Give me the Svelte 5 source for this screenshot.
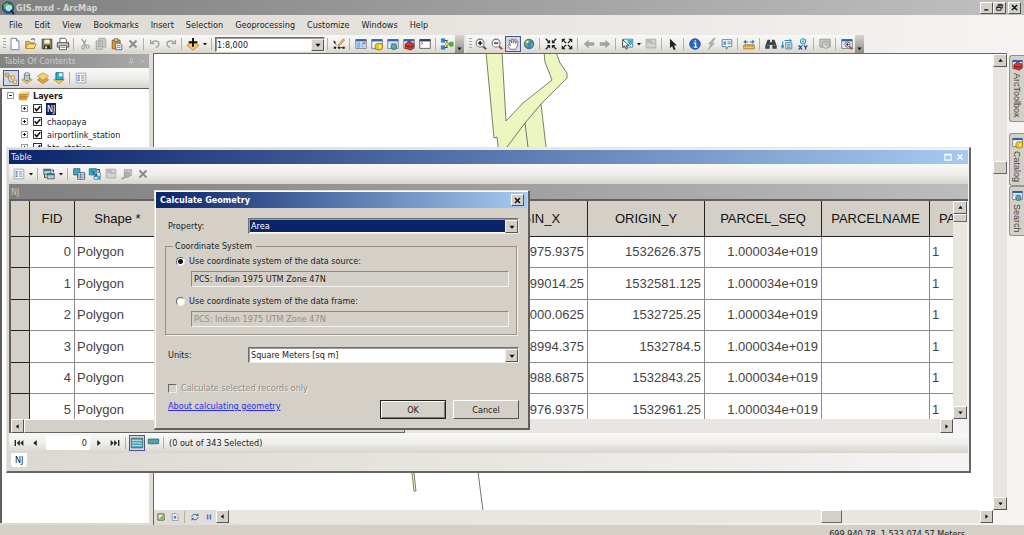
<script lang="ts">
  type Column = { name: string; width: number; align?: 'left' | 'right' };
  type Tool = { kind: 'icon' | 'sep' | 'arrow' | 'scale'; icon?: string; label?: string; active?: boolean };

  const win =
    '<path d="M2 3h12v10H2z" fill="#f4f6f8" stroke="#6f7680"/><path d="M2 2.500h12v2.500H2z" fill="#2f62b4"/>';

  // 16x16 glyph bodies
  const icons: Record<string, string> = {
    new: '<path d="M3.500 1.500h6l3 3v10h-9z" fill="#fff" stroke="#68788c"/><path d="M9.500 1.500v3h3" fill="#dce6f0" stroke="#68788c"/>',
    open: '<path d="M2 13V5h4l1 1.500h5V13z" fill="#e0b84c" stroke="#a87a1e"/><path d="M2 13l2.500-5H14l-2.500 5z" fill="#fbe08a" stroke="#b48a2a"/><path d="M8 3c2-2 4-1 4 1" fill="none" stroke="#2a62a8" stroke-width="1.200"/>',
    save: '<path d="M2.500 2.500h11v11h-11z" fill="#8f8648" stroke="#3a3a2c"/><path d="M5 3h6v4.500H5z" fill="#f3f1de"/><path d="M4.500 9.500h7v4h-7z" fill="#2e2e2e"/><path d="M6 10.500h2v2.500H6z" fill="#eee"/>',
    print: '<path d="M4.500 6V1.500h6l1.500 2V6" fill="#fff" stroke="#555"/><path d="M1.500 6.500h13v5h-13z" fill="#c4c6c8" stroke="#444"/><path d="M4 10h8v4.500H4z" fill="#fff" stroke="#555"/><path d="M5.500 12h5" stroke="#888"/><path d="M11.500 8h2" stroke="#d8a020"/>',
    cut: '<path d="M4 2l5 8M9 3L6.500 9.500" stroke="#a0a0a0" stroke-width="1.600" fill="none"/><circle cx="6" cy="12" r="1.800" fill="none" stroke="#a0a0a0" stroke-width="1.300"/><circle cx="11" cy="11" r="1.800" fill="none" stroke="#a0a0a0" stroke-width="1.300"/>',
    copy: '<path d="M5.500 1.500h7l1 1v9h-8z" fill="#c9c9c6" stroke="#a0a0a0"/><path d="M2.500 4.500h7v9.500h-7z" fill="#d2d0cc" stroke="#9a9a9a"/><path d="M4 7h4M4 9h4M4 11h4" stroke="#9a9a9a"/>',
    paste: '<path d="M2.500 3.500h9v10h-9z" fill="#d99a2e" stroke="#8a5c14"/><path d="M5 2h4v3H5z" fill="#d8d8d8" stroke="#666"/><path d="M6.500 7h5l2 2v5.500h-7z" fill="#eef4fc" stroke="#3f66a0"/><path d="M8 10h4M8 12h4" stroke="#6a8cc0"/>',
    del: '<path d="M4 4l8 8M12 4l-8 8" stroke="#8c8c8c" stroke-width="2.400"/>',
    undo: '<path d="M3 3v4.500h4.500" fill="none" stroke="#a4a4a4" stroke-width="1.600"/><path d="M3.500 7C6 4 12 3.500 12.500 7.500c.3 2-1.500 3.500-3.500 4.500" fill="none" stroke="#a4a4a4" stroke-width="1.600"/>',
    redo: '<path d="M13 3v4.500H8.500" fill="none" stroke="#a4a4a4" stroke-width="1.600"/><path d="M12.500 7C10 4 4 3.500 3.500 7.500c-.3 2 1.500 3.500 3.500 4.500" fill="none" stroke="#a4a4a4" stroke-width="1.600"/>',
    add: '<path d="M1 9.500L8 5l7 4.500L8 15z" fill="#f4c868" stroke="#c08a28"/><path d="M8 1v10M3 6h10" stroke="#111" stroke-width="2.200"/>',
    editor: '<path d="M2 4l3 5M3 12h9" stroke="#333" stroke-dasharray="2 1.500"/><path d="M2 11h2.500v2.500H2zM7 11h2.500v2.500H7zM12 11h2.500v2.500H12zM2 5h2v2H2z" fill="#111"/><path d="M7 9l6-7 1.500 1.500L8.500 10 6.500 10.500z" fill="#e8bc50" stroke="#8a6a20" stroke-width=".6"/>',
    table: win + '<path d="M3 5.500h3v7H3z" fill="#9cc2ee"/><path d="M3 8h10M3 10.500h10M6.500 5v8M10 5v8" stroke="#6c9ed8" stroke-width=".8"/><path d="M10 6h3v2h-3z" fill="#e86a3c"/>',
    catalog: win + '<path d="M6 9l2-2 6 .5v6L11 15l-5-1z" fill="#e8c420" stroke="#8e7408" stroke-width=".8"/><path d="M10 9h3v4h-3z" fill="#fbe878"/>',
    search: win + '<path d="M3 6h10v3H3z" fill="#c8d4de"/><circle cx="9" cy="11" r="3.300" fill="#4ea4e0" stroke="#2a6a90"/><path d="M7 11l2-2 2 1-1 3z" fill="#58b848"/>',
    toolbox: win + '<path d="M3.500 8l3-2 7 1v5l-3 3-7-2z" fill="#d03a30" stroke="#84201a" stroke-width=".8"/><path d="M6 6l3-1 2 1.500M3.500 10l7 1.500 3-2" fill="none" stroke="#701410"/>',
    python: '<path d="M2 3h12v10H2z" fill="#fff" stroke="#555"/><path d="M2 2.500h12v2.500H2z" fill="#283c6c"/><path d="M4 6l1.500 1.200L4 8.500" fill="none" stroke="#444"/>',
    model: '<path d="M4 4h4v4M4 12h4V8h5" stroke="#444" stroke-width="1.200" fill="none"/><path d="M1.500 2h4v4h-4zM1.500 10h4v4h-4z" fill="#2c8ade" stroke="#1d5f9e" stroke-width=".6"/><path d="M8 5.500l2.500 2.500L8 10.500 5.500 8z" fill="#f0d040" stroke="#937a10" stroke-width=".6"/><path d="M11 6h4v4.500h-4z" fill="#48b848" stroke="#2c7a2c" stroke-width=".6"/>',
    zoomin: '<path d="M9.500 10l4.500 4" stroke="#8a5040" stroke-width="2.400"/><circle cx="7" cy="7" r="4.600" fill="#f4f8fb" stroke="#70787e" stroke-width="1.200"/><path d="M7 4.500v5M4.500 7h5" stroke="#111" stroke-width="1.600"/>',
    zoomout: '<path d="M9.500 10l4.500 4" stroke="#a85040" stroke-width="2.400"/><circle cx="7" cy="7" r="4.600" fill="#f4f8fb" stroke="#70787e" stroke-width="1.200"/><path d="M4.500 7h5" stroke="#333" stroke-width="1.600"/>',
    pan: '<path d="M5 14L2 9.500 3 8.500l2 1.500L3.500 4l1.500-.5L6.500 7 6.500 2.500H8L8.500 7 10 2.500l1.300.5L10.800 7.500 12.500 4.500l1.300.6L12.500 11l-1.500 3z" fill="#fff" stroke="#555" stroke-width=".8"/>',
    globe: '<circle cx="8" cy="8" r="5.500" fill="#3c84cc" stroke="#24507c" stroke-width=".8"/><path d="M4 4.500l4-1.500 1 2-3 3 1 4-3-2-1-3zM10 7l3 0-1 4-2 0z" fill="#70b840"/><circle cx="6" cy="5.500" r="1.500" fill="#e8f4c8" opacity=".8"/>',
    fixedin: '<path d="M2 2l4 4M14 2l-4 4M2 14l4-4M14 14l-4-4" stroke="#222" stroke-width="1.600"/><path d="M7 3v4H3zM9 3v4h4zM7 13V9H3zM9 13V9h4z" fill="#222"/>',
    fixedout: '<path d="M3 3l4 4M13 3L9 7M3 13l4-4M13 13L9 9" stroke="#222" stroke-width="1.600"/><path d="M2 2h4.500L2 6.500zM14 2H9.500L14 6.500zM2 14h4.500L2 9.500zM14 14H9.500L14 9.500z" fill="#222"/>',
    back: '<path d="M2 8l5.500-5v3H14v4H7.500v3z" fill="#a2a2a2"/>',
    forward: '<path d="M14 8L8.500 3v3H2v4h6.500v3z" fill="#a2a2a2"/>',
    select: '<path d="M3.500 2.500h11v9h-11z" fill="#e4f4f6" stroke="#4a7a88"/><path d="M8 3h6v5l-3 2z" fill="#38b8d0"/><path d="M3 3v9l2.200-2L7 14l1.500-.8L7 9.500h3z" fill="#fff" stroke="#222" stroke-width=".9"/>',
    clear: '<path d="M2.500 2.500h11v10h-11z" fill="#d4d2ce" stroke="#aaa8a4"/><path d="M3 3h5v4H3z" fill="#bcbab6"/><path d="M8 3v4h5" fill="none" stroke="#aaa8a4"/>',
    pointer: '<path d="M4.500 2v10.500L7 10.500 9 15l2-1-2-4.300h3.500z" fill="#222"/>',
    info: '<circle cx="8" cy="8" r="6" fill="#2a66c4" stroke="#1c4690"/><path d="M6.500 7h2.200v4.500M6.500 11.500h4M7.500 4.500h1.500" stroke="#fff" stroke-width="1.400" fill="none"/>',
    bolt: '<path d="M11 1.500L5 8h3l-3 6.500 7-7.500H9l4-5.500z" fill="#b0b0b0" stroke="#8e8e8e" stroke-width=".5"/>',
    popup: '<path d="M2.500 3h11v8H9l-1.500 3L7 11H2.500z" fill="#f6fafd" stroke="#5a7894"/><path d="M4 5h3v4H4z" fill="#48a0d8"/><path d="M8.500 5.500h4M8.500 7.500h4" stroke="#5a7894"/>',
    measure: '<path d="M2 9h12v4.500H2z" fill="#f0c468" stroke="#a87c28"/><path d="M4 9v2M6 9v2M8 9v2M10 9v2M12 9v2" stroke="#8a6018" stroke-width=".7"/><path d="M1.500 5.500L4.500 3v5zM14.500 5.500L11.500 3v5zM4 5h3v1.200H4zM9 5h3v1.200H9z" fill="#2a72b8"/>',
    find: '<path d="M4 3h3v3h2V3h3l2.500 7v3.500H9.500V9h-3v4.500H1.500V10z" fill="#3c4248"/><path d="M3.500 9.500h2M11 9.500h2" stroke="#9aa2aa"/>',
    route: '<path d="M6.500 6.500h7v7h-7z" fill="#e6eef6" stroke="#3e7eb2"/><path d="M3 13V5M5 4h7M8 9h4M8 11.500h4" stroke="#3e8ec0" stroke-width="1.300"/><path d="M1.500 9h3v3h-3zM11 2l3 2-3 2z" fill="#3e8ec0"/>',
    xy: '<circle cx="8" cy="5" r="3" fill="#d4ecf6" stroke="#3a94c4" stroke-width="1.200"/><circle cx="8" cy="5" r="1" fill="#3a94c4"/><path d="M3 9.500l4 5M7 9.500l-4 5M9 9.500l2 2.500 2-2.500M11 12v2.500" stroke="#234a94" stroke-width="1.400" fill="none"/>',
    time: '<path d="M2 2.500h12v9H2z" fill="#c6c4c0" stroke="#9e9c98"/><circle cx="9" cy="9" r="4" fill="#d8d6d2" stroke="#9a9894"/><path d="M9 6.500V9h2" stroke="#8a8884" fill="none"/>',
    viewer: win + '<circle cx="8.500" cy="8.500" r="3" fill="#e8f0f8" stroke="#555"/><path d="M7 8.500h3M8.500 7v3" stroke="#222"/><path d="M11 11l3 3" stroke="#944034" stroke-width="2"/>',
    drawing: '<path d="M4 5l2.500 7.500H12M5 5l5 2.500" stroke="#8c8470" fill="none"/><path d="M1.500 2.500h4v4h-4z" fill="#eeb860" stroke="#b07c28" stroke-width=".7"/><path d="M8 5.500h4v3.500H8zM10.500 10.500h4v4h-4z" fill="#f6dca0" stroke="#b07c28" stroke-width=".7"/>',
    source: '<path d="M2 10l6-3.500 6 3.500-6 4.500z" fill="#f4c868" stroke="#c89838"/><path d="M5 3.500v6c0 2.200 6 2.200 6 0v-6" fill="#b4c8dc" stroke="#64788e"/><ellipse cx="8" cy="3.500" rx="3" ry="1.500" fill="#f0f6fa" stroke="#64788e"/>',
    visibility: '<path d="M1.500 10L8 6l6.500 4L8 14.500z" fill="#d8a048" stroke="#b07c28" stroke-width=".8"/><path d="M1.500 6L8 2l6.500 4L8 10.500z" fill="#f8d07c" stroke="#c08c34" stroke-width=".8"/>',
    selection: '<path d="M2 10l6-3 6 3-6 4.500z" fill="#f4c868" stroke="#c89838"/><path d="M4.500 2h8v8h-8z" fill="#20b8d0" stroke="#305a6c"/><path d="M8 2.500h4v3.500H8z" fill="#f2f8fa"/>',
    options: '<path d="M2.500 2.500h11v11h-11z" fill="#f8fafc" stroke="#8fa2b8"/><path d="M4 5.500h2.500M4 8h2.500M4 10.500h2.500" stroke="#2a62a8" stroke-width="1.300"/><path d="M8 5.500h4M8 8h4M8 10.500h4" stroke="#777"/>',
    related: '<path d="M2 2.500h8v6H2zM6 7.500h8v6H6z" fill="#b8ccd4" stroke="#4c5a60"/><path d="M2 2.500h8v2H2zM6 7.500h8v2H6z" fill="#3a7484"/><path d="M3 9v3h2M13 6V3.500h-2" stroke="#222" fill="none"/>',
    byattr: '<path d="M2 2h7v7H2z" fill="#30b0cc" stroke="#2c5a74"/><path d="M6.500 6.500h8v7.500h-8z" fill="#f4f4e8" stroke="#3c5878"/><path d="M6.500 9h8M6.500 11.500h8M10 7v7" stroke="#5a7090"/>',
    switchsel: '<path d="M1.500 2h8v7h-8z" fill="#2cb4d0" stroke="#2e6a80"/><path d="M7 6h7v8H7z" fill="#eef4f6" stroke="#5c8090"/><path d="M10.500 10h3.500v4h-3.500z" fill="#2cb4d0"/><path d="M4 4l6 6M10 7v3.500H7M10 3h3v3" stroke="#235a9c" stroke-width="1.400" fill="none"/>',
    zoomsel: '<path d="M5 3h8v7H5z" fill="#c8c6c2" stroke="#a4a29e"/><circle cx="8" cy="9" r="3" fill="#b4b2ae" stroke="#a09e9a"/><path d="M6 11l-4 3" stroke="#a09e9a" stroke-width="2"/>',
    allrec: '<path d="M1.500 2.500h13v11h-13z" fill="#4aa6b4" stroke="#456068"/><path d="M2 5h12M2 8h12M2 11h12" stroke="#cde8ec"/>',
    selrec: '<path d="M2.500 3.500h12v5h-12z" fill="#4aa6b4" stroke="#456068"/><path d="M3 9.500h11" stroke="#a8b4b8"/>',
    first: '<path d="M3 4.500h1.600v7H3zM9 4.500v7L5.500 8zM13 4.500v7L9.500 8z" fill="#222"/>',
    prev: '<path d="M10 4.500v7L6 8z" fill="#222"/>',
    next: '<path d="M6 4.500v7L10 8z" fill="#222"/>',
    last: '<path d="M13 4.500h-1.600v7H13zM7 4.500v7L10.500 8zM3 4.500v7L6.500 8z" fill="#222"/>',
    layers: '<path d="M2 12V6l3-3h9l-2.500 3.500V13H3z" fill="#e8ac4c"/><path d="M2 6.500h9.500L14 3M2 8.500h9.500L14 5M2 10.500h9.500L14 7" stroke="#a87020" fill="none" stroke-width=".8"/><path d="M3 5.500l2.500-2.500h8l-2 2.500z" fill="#fbdc98"/>',
    dataview: '<path d="M3 3h10v10H3z" fill="#dcecc0" stroke="#3c4838" stroke-width="1.300"/><path d="M4 12l8-8v8z" fill="#88b058"/>',
    layoutview: '<path d="M3.500 2.500h6.500l3 3v8h-9.500z" fill="#f0f4f8" stroke="#6a7888"/><path d="M6 6.500h4v4H6z" fill="#4c80b8"/>',
    refresh: '<path d="M3 8c0-4 6-6 8.500-3M13 8c0 4-6 6-8.500 3" stroke="#2c64ac" stroke-width="1.600" fill="none"/><path d="M13.500 2v4.500H9zM2.500 14V9.500H7z" fill="#2c64ac"/>',
    pause: '<path d="M4.500 4h2.500v8H4.500zM9 4h2.500v8H9z" fill="#4c7cc0"/>',
    up: '<path d="M8 5l4 5H4z" fill="#111"/>',
    down: '<path d="M8 11l4-5H4z" fill="#111"/>',
    left: '<path d="M5 8l5-4v8z" fill="#111"/>',
    right: '<path d="M11 8L6 4v8z" fill="#111"/>',
    minimize: '<path d="M4 11h7v2.500H4z" fill="#111"/>',
    restore: '<path d="M5.500 3h7.500v6h-2M5.500 4h7.500M5.500 3v3" stroke="#111" stroke-width="1.500" fill="none"/><path d="M3 7h7.500v6H3zM3 8h7.500" stroke="#111" stroke-width="1.500" fill="none"/>',
    close: '<path d="M3.500 3.500l9 9M12.500 3.500l-9 9" stroke="#111" stroke-width="2.600"/>',
    maximize: '<path d="M3 3.500h10v9.500H3zM3 4.500h10" fill="none" stroke="#fff" stroke-width="1.800"/>',
    closelight: '<path d="M4 4l8 8M12 4l-8 8" stroke="#fff" stroke-width="2"/>',
    closedim: '<path d="M4 4l8 8M12 4l-8 8" stroke="#c4c4c4" stroke-width="1.600"/>',
    pin: '<path d="M6 3h4v6H6zM4 9.500h8M8 10v4" stroke="#c4c4c4" stroke-width="1.400" fill="none"/>',
    check: '<path d="M3 7.500l3.500 4L13 4" stroke="#111" stroke-width="2.800" fill="none"/>',
    app: '<circle cx="8" cy="7.500" r="6.500" fill="#1c6ca4" stroke="#123c64"/><path d="M3 4l4-2 2 2-3 3 1 3-3-1zM10 3l3 2 0 3-2 0z" fill="#70b84c"/><circle cx="9" cy="8" r="3" fill="#9fe0f0" stroke="#e8f4f8"/><path d="M11 10.500l4 4.500" stroke="#222" stroke-width="2.200"/>'
  };

  const icon = (name: string, label: string, active = false): Tool => ({ kind: 'icon', icon: name, label, active });
  const sep: Tool = { kind: 'sep' };
  const arrow: Tool = { kind: 'arrow' };

  const menus = ['File', 'Edit', 'View', 'Bookmarks', 'Insert', 'Selection', 'Geoprocessing', 'Customize', 'Windows', 'Help'];

  const standardTools: Tool[] = [
    icon('new', 'New'), icon('open', 'Open'), icon('save', 'Save'), icon('print', 'Print'), sep,
    icon('cut', 'Cut'), icon('copy', 'Copy'), icon('paste', 'Paste'), icon('del', 'Delete'), sep,
    icon('undo', 'Undo'), icon('redo', 'Redo'), sep,
    icon('add', 'Add Data'), arrow, sep, { kind: 'scale' }, sep,
    icon('editor', 'Editor Toolbar'), sep,
    icon('table', 'Table Of Contents'), icon('catalog', 'Catalog'), icon('search', 'Search'),
    icon('toolbox', 'ArcToolbox'), icon('python', 'Python'), sep, icon('model', 'ModelBuilder')
  ];

  const mapTools: Tool[] = [
    icon('zoomin', 'Zoom In'), icon('zoomout', 'Zoom Out'), icon('pan', 'Pan', true), icon('globe', 'Full Extent'), sep,
    icon('fixedin', 'Fixed Zoom In'), icon('fixedout', 'Fixed Zoom Out'), sep,
    icon('back', 'Previous Extent'), icon('forward', 'Next Extent'), sep,
    icon('select', 'Select Features'), arrow, icon('clear', 'Clear Selection'), sep,
    icon('pointer', 'Select Elements'), sep,
    icon('info', 'Identify'), icon('bolt', 'Hyperlink'), icon('popup', 'HTML Popup'), sep,
    icon('measure', 'Measure'), sep,
    icon('find', 'Find'), icon('route', 'Find Route'), icon('xy', 'Go To XY'), sep,
    icon('time', 'Time Slider'), sep, icon('viewer', 'Viewer Window')
  ];

  const tocTools: Tool[] = [
    icon('drawing', 'List By Drawing Order', true), icon('source', 'List By Source'),
    icon('visibility', 'List By Visibility'), icon('selection', 'List By Selection'), sep, icon('options', 'Options')
  ];

  const tableTools: Tool[] = [
    icon('options', 'Table Options'), arrow, sep, icon('related', 'Related Tables'), arrow, sep,
    icon('byattr', 'Select By Attributes'), icon('switchsel', 'Switch Selection'),
    icon('clear', 'Clear Selection'), icon('zoomsel', 'Zoom To Selected'), icon('del', 'Delete Selected')
  ];

  let layers = $state([
    { name: 'NJ', visible: true },
    { name: 'chaopaya', visible: true },
    { name: 'airportlink_station', visible: true },
    { name: 'bts_station', visible: true }
  ]);
  let selectedLayer = $state('NJ');

  const dockTabs = [
    { name: 'ArcToolbox', icon: 'toolbox' },
    { name: 'Catalog', icon: 'catalog' },
    { name: 'Search', icon: 'search' }
  ];

  const columns: Column[] = [
    { name: 'FID', width: 45, align: 'right' },
    { name: 'Shape *', width: 86 },
    { name: '', width: 310 },
    { name: 'ORIGIN_X', width: 117, align: 'right' },
    { name: 'ORIGIN_Y', width: 117, align: 'right' },
    { name: 'PARCEL_SEQ', width: 117, align: 'right' },
    { name: 'PARCELNAME', width: 108 },
    { name: 'PARCELTYPE', width: 103 }
  ];

  const rows = [
    ['0', 'Polygon', '', '698975.9375', '1532626.375', '1.000034e+019', '', '1'],
    ['1', 'Polygon', '', '699014.25', '1532581.125', '1.000034e+019', '', '1'],
    ['2', 'Polygon', '', '699000.0625', '1532725.25', '1.000034e+019', '', '1'],
    ['3', 'Polygon', '', '698994.375', '1532784.5', '1.000034e+019', '', '1'],
    ['4', 'Polygon', '', '698988.6875', '1532843.25', '1.000034e+019', '', '1'],
    ['5', 'Polygon', '', '698976.9375', '1532961.25', '1.000034e+019', '', '1']
  ];

  let source = $state('data');
  let record = $state('0');
</script>

{#snippet glyph(name: string)}
  <svg class="glyph" viewBox="0 0 16 16" aria-hidden="true">{@html icons[name]}</svg>
{/snippet}

{#snippet tools(items: Tool[])}
  {#each items as t}
    {#if t.kind === 'sep'}
      <span class="sep"></span>
    {:else if t.kind === 'arrow'}
      <button class="drop" aria-label="More">{@render glyph('down')}</button>
    {:else if t.kind === 'scale'}
      <span class="combo scale">
        <select aria-label="Map scale"><option>1:8,000</option></select>
        <span class="combo-arrow">{@render glyph('down')}</span>
      </span>
    {:else}
      <button class="tool" class:active={t.active} aria-label={t.label}>{@render glyph(t.icon ?? '')}</button>
    {/if}
  {/each}
{/snippet}

<div class="app">
  <header class="titlebar">
    {@render glyph('app')}
    <h1>GIS.mxd - ArcMap</h1>
    <button class="raised" aria-label="Minimize">{@render glyph('minimize')}</button>
    <button class="raised" aria-label="Restore">{@render glyph('restore')}</button>
    <button class="raised last" aria-label="Close">{@render glyph('close')}</button>
  </header>

  <nav class="menubar">
    {#each menus as menu}
      <button>{menu}</button>
    {/each}
  </nav>

  <div class="toolbars">
    <div class="toolbar">
      <span class="grip"></span>
      {@render tools(standardTools)}
      <button class="overflow" aria-label="Toolbar options">{@render glyph('down')}</button>
    </div>
    <div class="toolbar">
      <span class="grip"></span>
      {@render tools(mapTools)}
      <button class="overflow" aria-label="Toolbar options">{@render glyph('down')}</button>
    </div>
  </div>

  <main class="workspace">
    <aside class="toc">
      <div class="panel-title">
        <h2>Table Of Contents</h2>
        {@render glyph('pin')}
        {@render glyph('closedim')}
      </div>
      <div class="toc-tools">{@render tools(tocTools)}</div>
      <div class="tree">
        <div class="root">
          <button class="expander" aria-label="Collapse Layers"></button>
          {@render glyph('layers')}
          <strong>Layers</strong>
        </div>
        {#each layers as layer}
          <div class="layer">
            <button class="expander plus" aria-label="Expand {layer.name}"></button>
            <label class="tick">
              <input type="checkbox" aria-label="Show {layer.name}" bind:checked={layer.visible} />
              {#if layer.visible}{@render glyph('check')}{/if}
            </label>
            <button
              class="name"
              class:selected={layer.name === selectedLayer}
              onclick={() => (selectedLayer = layer.name)}>{layer.name}</button>
          </div>
        {/each}
      </div>
    </aside>

    <section class="map-frame">
      <div class="map-row">
        <svg class="map" role="img" aria-label="Map">
          <path
            class="parcel"
            d="M332 -2L340 84L343 83L346 110H394L387 50L413 24V19L406 9L402 -2H390L391 8L398 26L369 49L352 67L348 -2Z" />
          <path class="line" d="M353 93L371 69L387 50M371 69L374 93" />
          <path class="parcel" d="M257 410L260 437L262 437L259 410Z" />
          <path class="line" d="M323 410L329 457" />
        </svg>
        <div class="vscroll">
          <button class="raised" aria-label="Scroll up">{@render glyph('up')}</button>
          <span class="space before"></span>
          <span class="thumb"></span>
          <span class="space"></span>
          <button class="raised" aria-label="Scroll down">{@render glyph('down')}</button>
        </div>
      </div>
      <div class="map-bottom">
        <button class="mini" aria-label="Data View">{@render glyph('dataview')}</button>
        <button class="mini" aria-label="Layout View">{@render glyph('layoutview')}</button>
        <span class="sep"></span>
        <button class="mini" aria-label="Refresh">{@render glyph('refresh')}</button>
        <button class="mini" aria-label="Pause Drawing">{@render glyph('pause')}</button>
        <div class="hscroll">
          <button class="raised" aria-label="Scroll left">{@render glyph('left')}</button>
          <span class="space before"></span>
          <span class="thumb"></span>
          <span class="space"></span>
          <button class="raised" aria-label="Scroll right">{@render glyph('right')}</button>
        </div>
      </div>
    </section>

    <aside class="dock">
      {#each dockTabs as tab}
        <button>{@render glyph(tab.icon)}<span>{tab.name}</span></button>
      {/each}
    </aside>
  </main>

  <footer class="status"><span>699,940.78&nbsp; 1,533,074.57 Meters</span></footer>

  <section class="table-window">
    <div class="table-title">
      <h2>Table</h2>
      <button aria-label="Maximize">{@render glyph('maximize')}</button>
      <button aria-label="Close table">{@render glyph('closelight')}</button>
    </div>
    <div class="table-tools">{@render tools(tableTools)}</div>
    <div class="table-name"><span>NJ</span>{@render glyph('closedim')}</div>
    <div class="grid-area">
      <div class="grid-scroll">
        <table>
          <colgroup>
            <col style="width: 19px" />
            {#each columns as col}
              <col style="width: {col.width}px" />
            {/each}
          </colgroup>
          <thead>
            <tr>
              <th></th>
              {#each columns as col}
                <th>{col.name}</th>
              {/each}
            </tr>
          </thead>
          <tbody>
            {#each rows as row}
              <tr>
                <th></th>
                {#each row as cell, i}
                  <td class:right={columns[i].align === 'right'}>{cell}</td>
                {/each}
              </tr>
            {/each}
          </tbody>
        </table>
      </div>
      <div class="vscroll">
        <button class="raised" aria-label="Scroll up">{@render glyph('up')}</button>
        <span class="thumb short"></span>
        <span class="space"></span>
        <button class="raised" aria-label="Scroll down">{@render glyph('down')}</button>
      </div>
    </div>
    <div class="grid-hscroll">
      <div class="hscroll">
        <button class="raised" aria-label="Scroll left">{@render glyph('left')}</button>
        <span class="thumb long"></span>
        <span class="space"></span>
        <button class="raised" aria-label="Scroll right">{@render glyph('right')}</button>
      </div>
    </div>
    <div class="record-bar">
      <button class="tool" aria-label="First record">{@render glyph('first')}</button>
      <button class="tool" aria-label="Previous record">{@render glyph('prev')}</button>
      <input type="text" aria-label="Record" bind:value={record} />
      <button class="tool" aria-label="Next record">{@render glyph('next')}</button>
      <button class="tool" aria-label="Last record">{@render glyph('last')}</button>
      <span class="sep"></span>
      <button class="tool active" aria-label="Show all records">{@render glyph('allrec')}</button>
      <button class="tool" aria-label="Show selected records">{@render glyph('selrec')}</button>
      <span class="sep"></span>
      <span class="count">(0 out of 343 Selected)</span>
    </div>
    <div class="tabs"><button>NJ</button></div>
  </section>

  <form class="dialog" onsubmit={(e) => e.preventDefault()}>
    <div class="dialog-title">
      <h2>Calculate Geometry</h2>
      <button type="button" class="raised" aria-label="Close dialog">{@render glyph('close')}</button>
    </div>
    <div class="dialog-body">
      <div class="field">
        <label for="property">Property:</label>
        <span class="combo highlighted">
          <select id="property"><option>Area</option><option>Perimeter</option></select>
          <span class="combo-arrow">{@render glyph('down')}</span>
        </span>
      </div>
      <fieldset>
        <legend>Coordinate System</legend>
        <label><input type="radio" name="cs" value="data" bind:group={source} />Use coordinate system of the data source:</label>
        <input class="pcs" type="text" readonly aria-label="Data source coordinate system" value="PCS: Indian 1975 UTM Zone 47N" />
        <label><input type="radio" name="cs" value="frame" bind:group={source} />Use coordinate system of the data frame:</label>
        <input class="pcs" type="text" disabled aria-label="Data frame coordinate system" value="PCS: Indian 1975 UTM Zone 47N" />
      </fieldset>
      <div class="field">
        <label for="units">Units:</label>
        <span class="combo">
          <select id="units"><option>Square Meters [sq m]</option></select>
          <span class="combo-arrow">{@render glyph('down')}</span>
        </span>
      </div>
      <label class="only"><input type="checkbox" disabled />Calculate selected records only</label>
      <div class="dialog-actions">
        <a href="#about">About calculating geometry</a>
        <button class="push default">OK</button>
        <button type="button" class="push">Cancel</button>
      </div>
    </div>
  </form>
</div>

<style>
  :global(body) {
    margin: 0;
    overflow: hidden;
  }

  .app {
    --face: #d4d0c8;
    position: relative;
    display: flex;
    flex-direction: column;
    height: 100vh;
    overflow: hidden;
    background: linear-gradient(90deg, #dcd8d2, #f5f4f2);
    font: 9px/12px "DejaVu Sans Condensed", Tahoma, "DejaVu Sans", sans-serif;
    color: #222;
  }

  .app * {
    box-sizing: border-box;
  }

  button,
  input,
  select {
    margin: 0;
    padding: 0;
    border: 0;
    border-radius: 0;
    background: none;
    color: inherit;
    font: inherit;
  }

  h1,
  h2 {
    margin: 0;
    font: inherit;
  }

  .glyph {
    display: block;
    flex: none;
    width: 14px;
    height: 14px;
  }

  .raised {
    display: flex;
    flex: none;
    align-items: center;
    justify-content: center;
    width: 13px;
    height: 12px;
    background: var(--face);
    border: 1px solid;
    border-color: #fff #555 #555 #fff;
  }

  .raised .glyph {
    width: 9px;
    height: 9px;
  }

  .titlebar {
    display: flex;
    flex: none;
    align-items: center;
    height: 15px;
    padding: 0 3px 0 1px;
    background: linear-gradient(90deg, #808080, #c0c0c0);
    color: #d8d5cf;
  }

  .titlebar h1 {
    flex: 1;
    margin-left: 1px;
    font-weight: bold;
  }

  .titlebar .last {
    margin-left: 2px;
  }

  .menubar {
    display: flex;
    flex: none;
    gap: 12px;
    height: 20px;
    padding: 0 9px;
  }

  .toolbars {
    display: flex;
    flex: none;
    gap: 2px;
    height: 18px;
  }

  .toolbar,
  .toc-tools,
  .table-tools,
  .record-bar {
    display: flex;
    align-items: center;
    background: linear-gradient(#f8f8f7, #efeeeb 50%, #d8d4cc);
  }

  .grip {
    width: 3px;
    height: 12px;
    margin: 0 1px 0 3px;
    background: repeating-linear-gradient(#a8a49c 0 1px, transparent 1px 3px);
  }

  .tool {
    display: flex;
    flex: none;
    align-items: center;
    justify-content: center;
    width: 16px;
    height: 16px;
  }

  .tool.active {
    background: #d3d8e4;
    border: 1px solid #47578c;
  }

  .sep {
    flex: none;
    width: 1px;
    height: 12px;
    margin: 0 3px 0 2px;
    background: #b4b0a8;
  }

  .drop {
    display: flex;
    flex: none;
    justify-content: center;
    width: 8px;
  }

  .drop .glyph {
    width: 8px;
    height: 8px;
  }

  .overflow {
    display: flex;
    align-items: flex-end;
    justify-content: center;
    align-self: stretch;
    width: 9px;
    background: linear-gradient(#d8d5d0, #8e8c88);
  }

  .overflow .glyph {
    width: 9px;
    height: 9px;
  }

  .combo {
    position: relative;
    flex: 1;
    height: 16px;
    background: #fff;
    border: 1px solid;
    border-color: #707070 #f0eeea #f0eeea #707070;
    box-shadow: inset 1px 1px #999;
  }

  .combo.scale {
    flex: none;
    width: 110px;
    height: 15px;
  }

  .combo select {
    display: block;
    width: 100%;
    height: 100%;
    padding: 0 16px 0 1px;
    appearance: none;
    border: 1px solid transparent;
    outline: 0;
  }

  .scale select {
    padding-left: 0;
  }

  .highlighted select {
    background: #0a246a;
    background-clip: padding-box;
    color: #fff;
  }

  .combo-arrow {
    position: absolute;
    top: 1px;
    right: 0;
    bottom: 0;
    display: flex;
    align-items: center;
    justify-content: center;
    width: 13px;
    background: var(--face);
    border: 1px solid;
    border-color: #f4f2ee #555 #555 #f4f2ee;
    pointer-events: none;
  }

  .combo-arrow .glyph {
    width: 10px;
    height: 10px;
  }

  .workspace {
    display: flex;
    flex: 1;
    min-height: 0;
  }

  .toc {
    display: flex;
    flex: none;
    flex-direction: column;
    width: 149px;
    padding: 1px 0 2px;
  }

  .panel-title {
    display: flex;
    align-items: center;
    height: 14px;
    padding: 0 1px 0 4px;
    background: linear-gradient(90deg, #838383, #aaa);
    color: #cfccc6;
  }

  .panel-title h2 {
    flex: 1;
  }

  .panel-title .glyph {
    width: 11px;
    height: 9px;
  }

  .toc-tools {
    height: 20px;
    padding-left: 3px;
  }

  .tree {
    flex: 1;
    padding-left: 5px;
    background: #fff;
    border: solid #606060;
    border-width: 1px 0 0 2px;
    overflow: hidden;
  }

  .root,
  .layer {
    display: flex;
    align-items: center;
    height: 13px;
  }

  .root .glyph {
    margin: 0 2px 0 3px;
  }

  .layer {
    padding-left: 14px;
  }

  .expander {
    flex: none;
    width: 7px;
    height: 7px;
    background: linear-gradient(#222, #222) center / 3px 1px no-repeat;
    border: 1px solid #999;
  }

  .expander.plus {
    background:
      linear-gradient(#222, #222) center / 3px 1px no-repeat,
      linear-gradient(#222, #222) center / 1px 3px no-repeat;
  }

  input[type='checkbox'] {
    flex: none;
    width: 9px;
    height: 9px;
    appearance: none;
    background: #fff;
    border: 1px solid #333;
  }

  .tick {
    display: grid;
    flex: none;
    place-items: center;
    margin: 0 4px 0 5px;
  }

  .tick > :global(*) {
    grid-area: 1 / 1;
  }

  .tick .glyph {
    width: 9px;
    height: 9px;
    pointer-events: none;
  }

  .name {
    padding: 0 1px;
  }

  .name.selected {
    background: #0a246a;
    color: #fff;
  }

  .map-frame {
    display: flex;
    flex: 1;
    flex-direction: column;
    min-width: 0;
    margin-left: 4px;
    padding-bottom: 2px;
    border: solid #666;
    border-width: 1px 0 0 1px;
  }

  .map-row {
    display: flex;
    flex: 1;
    min-height: 0;
  }

  .map {
    display: block;
    flex: 1;
    min-width: 0;
    height: 100%;
    background: #fff;
  }

  .parcel {
    fill: #ebf6c1;
    stroke: #7a8068;
  }

  .line {
    fill: none;
    stroke: #707468;
  }

  .vscroll {
    display: flex;
    flex: none;
    flex-direction: column;
    width: 14px;
    background: #e9e6e1;
  }

  .hscroll {
    display: flex;
    flex: 1;
    background: #e9e6e1;
  }

  .vscroll .raised {
    width: 14px;
    height: 13px;
  }

  .hscroll .raised {
    height: auto;
  }

  .space {
    flex: 1;
  }

  .thumb {
    flex: none;
    background: var(--face);
    border: 1px solid;
    border-color: #fff #666 #666 #fff;
  }

  .map-row .thumb {
    height: 13px;
  }

  .map-row .before {
    flex: 0 1 94px;
  }

  .map-bottom .thumb {
    width: 21px;
  }

  .map-bottom .before {
    flex: 4.3;
  }

  .thumb.short {
    height: 8px;
  }

  .thumb.long {
    width: 381px;
    max-width: 60%;
  }

  .map-bottom {
    display: flex;
    align-items: stretch;
    height: 13px;
    padding-right: 14px;
  }

  .map-bottom .sep {
    align-self: center;
  }

  .mini {
    display: flex;
    flex: none;
    align-items: center;
    justify-content: center;
    width: 14px;
  }

  .mini .glyph {
    width: 10px;
    height: 10px;
  }

  .dock {
    display: flex;
    flex: none;
    flex-direction: column;
    align-items: flex-end;
    width: 17px;
    padding-top: 2px;
  }

  .dock button {
    display: flex;
    flex-direction: column;
    align-items: center;
    gap: 2px;
    width: 15px;
    padding: 2px 0 3px;
    background: var(--face);
    border: 1px solid #96938d;
    border-right: 0;
    border-radius: 3px 0 0 3px;
    color: #444;
  }

  .dock button:first-child {
    margin-bottom: 11px;
  }

  .dock .glyph {
    width: 13px;
    height: 13px;
  }

  .dock span {
    writing-mode: vertical-rl;
    font-family: "Liberation Sans", Arial, sans-serif;
  }

  .status {
    display: flex;
    flex: none;
    justify-content: flex-end;
    height: 10px;
    padding: 3px 59px 0 0;
    background: var(--face);
    overflow: hidden;
  }

  .table-window {
    position: absolute;
    top: 147px;
    right: 53px;
    left: 6px;
    display: flex;
    flex-direction: column;
    padding: 2px 1px 3px 2px;
    background: linear-gradient(90deg, #dcd8d2, #f5f4f2);
    border: solid;
    border-width: 1px 2px 2px 1px;
    border-color: #e8e6e2 #666 #666 #e8e6e2;
  }

  .table-title {
    display: flex;
    align-items: center;
    height: 14px;
    padding: 0 2px;
    background: linear-gradient(90deg, #0a246a, #a6caf0);
    color: #e6ecf6;
  }

  .table-title h2 {
    flex: 1;
  }

  .table-title .glyph {
    width: 12px;
    height: 10px;
  }

  .table-tools {
    height: 20px;
    padding-left: 2px;
  }

  .table-name {
    display: flex;
    align-items: center;
    justify-content: space-between;
    height: 15px;
    padding: 0 1px 0 2px;
    background: linear-gradient(90deg, #808080, #bcbcbc);
    color: #c8c5bf;
  }

  .table-name .glyph {
    width: 10px;
    height: 9px;
  }

  .grid-area {
    display: flex;
    height: 220px;
    border: solid #606060;
    border-width: 2px 0 0 2px;
  }

  .grid-area .vscroll {
    margin-right: 1px;
  }

  .grid-scroll {
    flex: 1;
    min-width: 0;
    background: #fff;
    overflow: hidden;
  }

  table {
    width: 1022px;
    table-layout: fixed;
    border-collapse: separate;
    border-spacing: 0;
    font: 13px/16px "Liberation Sans", Arial, sans-serif;
  }

  th {
    padding: 0;
    background: var(--face);
    border: solid #222;
    border-width: 0 1px 1px 0;
    color: #111;
    font-weight: normal;
    overflow: hidden;
  }

  thead th {
    height: 36px;
  }

  td {
    height: 31px;
    padding: 0 3px 0 2px;
    border: solid #8c8c8c;
    border-width: 0 1px 1px 0;
    color: #444;
    white-space: nowrap;
  }

  tr:nth-child(even) td {
    height: 32px;
  }

  .right {
    text-align: right;
  }

  .grid-hscroll {
    display: flex;
    height: 14px;
    padding-right: 15px;
    border-left: 2px solid #606060;
  }

  .record-bar {
    height: 20px;
    padding-left: 2px;
  }

  .record-bar input {
    width: 44px;
    height: 14px;
    margin: 0 1px 0 3px;
    padding-right: 3px;
    background: #fff;
    text-align: right;
  }

  .count {
    padding-left: 2px;
  }

  .tabs {
    height: 15px;
    padding-left: 2px;
  }

  .tabs button {
    display: block;
    height: 14px;
    padding: 0 4px;
    background: #fff;
    border-radius: 0 0 3px 3px;
  }

  .dialog {
    position: absolute;
    top: 190px;
    left: 154px;
    width: 376px;
    padding: 1px;
    background: var(--face);
    border: solid;
    border-width: 1px 2px 2px 1px;
    border-color: #e4e1db #606060 #606060 #e4e1db;
    box-shadow: inset 1px 1px #fff;
  }

  .dialog-title {
    display: flex;
    align-items: center;
    height: 16px;
    padding: 0 3px 0 4px;
    background: linear-gradient(90deg, #0a246a, #a6caf0);
    color: #fff;
    font-weight: bold;
  }

  .dialog-title h2 {
    flex: 1;
  }

  .dialog-body {
    padding: 10px 8px 8px 9px;
  }

  .field {
    display: flex;
    align-items: center;
    padding-left: 3px;
  }

  .field label {
    width: 80px;
  }

  fieldset {
    display: flex;
    flex-direction: column;
    margin: 6px 2px 12px 0;
    padding: 3px 7px 7px 10px;
    border: 1px solid #96928b;
    box-shadow: 1px 1px #f4f2ee;
  }

  legend {
    margin-left: -3px;
    padding: 0 4px 0 2px;
  }

  fieldset label {
    display: flex;
    align-items: center;
    gap: 4px;
  }

  input[type='radio'] {
    width: 9px;
    height: 9px;
    appearance: none;
    background: #fff;
    border: 1px solid;
    border-color: #666 #eee #eee #666;
    border-radius: 50%;
  }

  input[type='radio']:checked {
    background: radial-gradient(circle, #111 0 2px, #fff 3px);
  }

  .pcs {
    height: 16px;
    margin: 4px 0 8px 15px;
    padding: 0 2px;
    border: 1px solid;
    border-color: #8c8882 #f4f2ee #f4f2ee #8c8882;
  }

  .pcs:disabled {
    margin-bottom: 0;
    color: #918d86;
  }

  .only {
    display: flex;
    align-items: center;
    gap: 4px;
    margin: 19px 0 6px 3px;
    color: #918d86;
    text-shadow: 1px 1px #f0eeea;
  }

  .only input {
    background: var(--face);
    border-color: #666 #f0eeea #f0eeea #666;
  }

  .dialog-actions {
    display: flex;
    gap: 7px;
    padding-left: 3px;
  }

  .dialog-actions a {
    flex: 1;
    color: #2a2af0;
  }

  .push {
    width: 66px;
    height: 19px;
    border: 1px solid;
    border-color: #fff #555 #555 #fff;
  }

  .push.default {
    border-color: #222;
    box-shadow: inset 1px 1px #fff, inset -1px -1px #777;
  }
</style>
